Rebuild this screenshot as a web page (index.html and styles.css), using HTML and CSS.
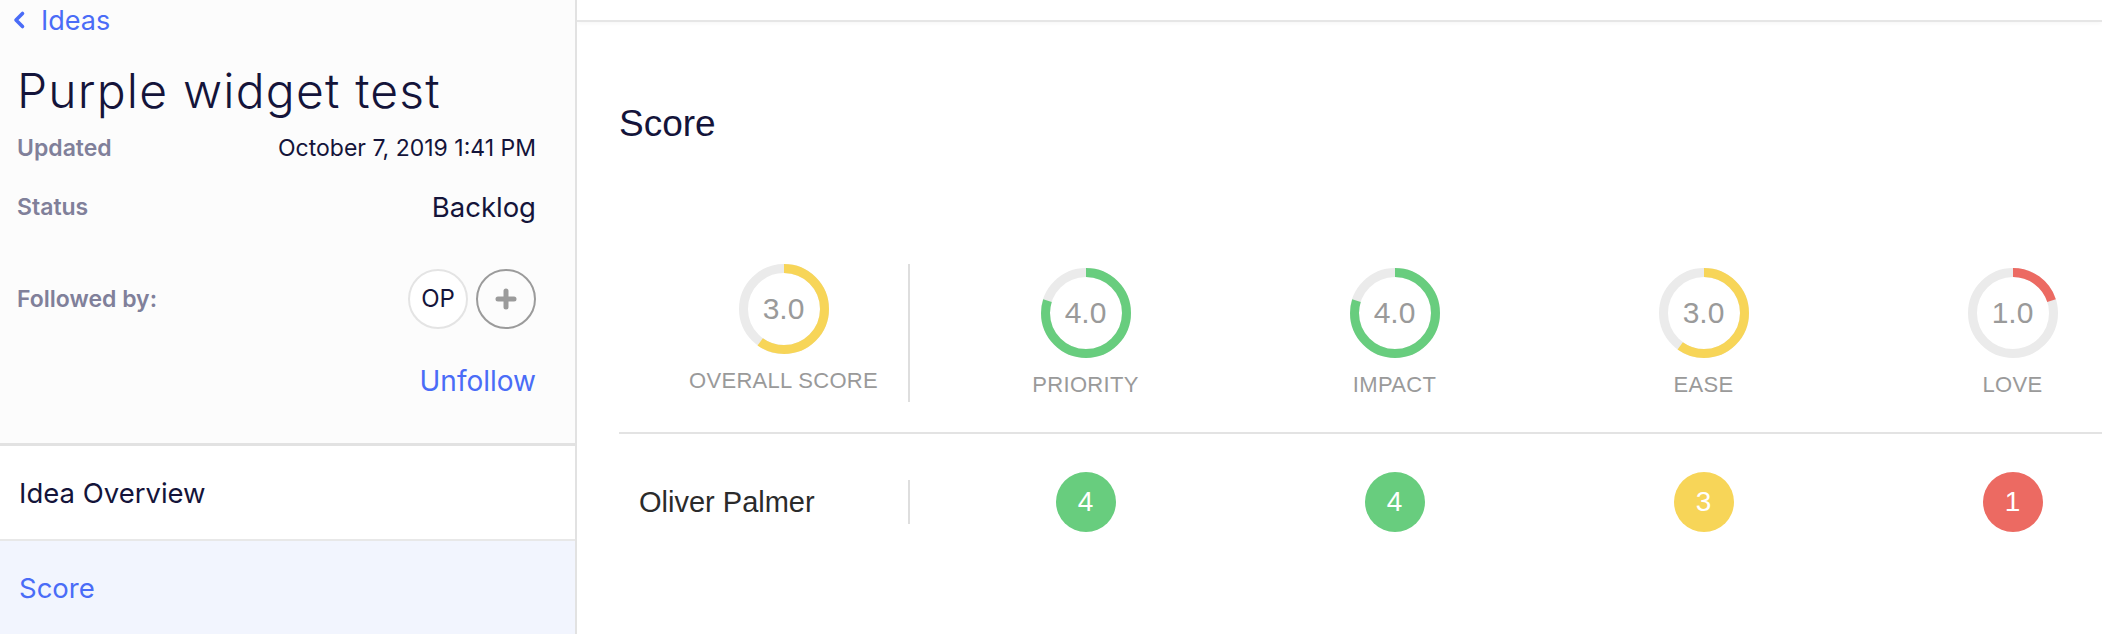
FILE: index.html
```html
<!DOCTYPE html>
<html lang="en">
<head>
<meta charset="utf-8">
<title>Purple widget test</title>
<link rel="stylesheet" href="styles.css">
</head>
<body>
<div class="app">
  <aside class="sidebar">
    <div class="sidebar-top">
      <a class="back" href="#">
        <svg class="back-icon" width="14" height="20" viewBox="0 0 14 20" aria-hidden="true"><path d="M10.5 3.5 L4 10 L10.5 16.5" fill="none" stroke="#4a6cf7" stroke-width="3.6" stroke-linecap="round" stroke-linejoin="round"/></svg>
        <span>Ideas</span>
      </a>
      <h1 class="title">Purple widget test</h1>
      <div class="meta meta-updated">
        <span class="meta-label">Updated</span>
        <span class="meta-date">October 7, 2019 1:41 PM</span>
      </div>
      <div class="meta meta-status">
        <span class="meta-label">Status</span>
        <span class="meta-status-value">Backlog</span>
      </div>
      <div class="meta meta-followed">
        <span class="meta-label">Followed by:</span>
        <div class="followers">
          <span class="avatar">OP</span>
          <span class="add-follower">
            <svg width="22" height="22" viewBox="0 0 22 22" aria-hidden="true"><path d="M11 3 V19 M3 11 H19" stroke="#9b9b9b" stroke-width="5" stroke-linecap="round"/></svg>
          </span>
        </div>
      </div>
      <div class="meta meta-unfollow">
        <a class="unfollow" href="#">Unfollow</a>
      </div>
    </div>
    <nav class="side-nav">
      <a class="nav-item" href="#">Idea Overview</a>
      <a class="nav-item nav-active" href="#">Score</a>
    </nav>
  </aside>

  <main class="main">
    <div class="topbar"></div>
    <section class="content">
      <h2 class="heading">Score</h2>

      <div class="summary">
        <div class="overall">
          <div class="metric">
            <div class="ring">
              <svg width="90" height="90" viewBox="0 0 90 90"><circle class="track" cx="45" cy="45" r="40.5"/><circle class="arc yellow" cx="45" cy="45" r="40.5" pathLength="100" stroke-dasharray="60 100" transform="rotate(-90 45 45)"/></svg>
              <span class="ring-value">3.0</span>
            </div>
            <div class="metric-label">OVERALL SCORE</div>
          </div>
        </div>
        <div class="metrics">
          <div class="metric col">
            <div class="ring">
              <svg width="90" height="90" viewBox="0 0 90 90"><circle class="track" cx="45" cy="45" r="40.5"/><circle class="arc green" cx="45" cy="45" r="40.5" pathLength="100" stroke-dasharray="80 100" transform="rotate(-90 45 45)"/></svg>
              <span class="ring-value">4.0</span>
            </div>
            <div class="metric-label">PRIORITY</div>
          </div>
          <div class="metric col">
            <div class="ring">
              <svg width="90" height="90" viewBox="0 0 90 90"><circle class="track" cx="45" cy="45" r="40.5"/><circle class="arc green" cx="45" cy="45" r="40.5" pathLength="100" stroke-dasharray="80 100" transform="rotate(-90 45 45)"/></svg>
              <span class="ring-value">4.0</span>
            </div>
            <div class="metric-label">IMPACT</div>
          </div>
          <div class="metric col">
            <div class="ring">
              <svg width="90" height="90" viewBox="0 0 90 90"><circle class="track" cx="45" cy="45" r="40.5"/><circle class="arc yellow" cx="45" cy="45" r="40.5" pathLength="100" stroke-dasharray="60 100" transform="rotate(-90 45 45)"/></svg>
              <span class="ring-value">3.0</span>
            </div>
            <div class="metric-label">EASE</div>
          </div>
          <div class="metric col">
            <div class="ring">
              <svg width="90" height="90" viewBox="0 0 90 90"><circle class="track" cx="45" cy="45" r="40.5"/><circle class="arc red" cx="45" cy="45" r="40.5" pathLength="100" stroke-dasharray="20 100" transform="rotate(-90 45 45)"/></svg>
              <span class="ring-value">1.0</span>
            </div>
            <div class="metric-label">LOVE</div>
          </div>
        </div>
      </div>

      <div class="ratings">
        <div class="rater">Oliver Palmer</div>
        <div class="metrics">
          <div class="col"><span class="badge green-bg">4</span></div>
          <div class="col"><span class="badge green-bg">4</span></div>
          <div class="col"><span class="badge yellow-bg">3</span></div>
          <div class="col"><span class="badge red-bg">1</span></div>
        </div>
      </div>
    </section>
  </main>
</div>
</body>
</html>
```

FILE: styles.css
```css
* { box-sizing: border-box; }

html, body {
  margin: 0;
  padding: 0;
  background: #ffffff;
}

body {
  font-family: "Inter", "Noto Sans", sans-serif;
  color: #14143a;
}

a { text-decoration: none; }

.app {
  display: flex;
  height: 634px;
  overflow: hidden;
}

/* ---------- Sidebar ---------- */
.sidebar {
  width: 577px;
  flex-shrink: 0;
  border-right: 2px solid #e2e2e2;
  background: #fcfcfc;
  display: flex;
  flex-direction: column;
}

.sidebar-top {
  padding: 0 39px 41px 17px;
}

.back {
  display: flex;
  align-items: center;
  height: 40px;
  gap: 15px;
  margin-left: -5px;
  color: #4a6cf7;
  font-size: 27px;
  font-weight: 400;
}

.back-icon { display: block; }

.title {
  margin: 22px 0 0 0;
  font-size: 48px;
  line-height: 57px;
  font-weight: 300;
  color: #14143a;
  letter-spacing: 1.2px;
}

.meta {
  display: flex;
  align-items: center;
  justify-content: space-between;
}

.meta-updated { height: 57px; }
.meta-status { height: 61px; }
.meta-followed { height: 123px; }
.meta-unfollow { height: 42px; justify-content: flex-end; }

.meta-label {
  font-size: 23px;
  font-weight: 600;
  color: #80809a;
}

.meta-date {
  font-size: 23px;
  color: #14143a;
}

.meta-status-value {
  font-size: 27.5px;
  color: #14143a;
}

.followers {
  display: flex;
  gap: 8px;
}

.avatar,
.add-follower {
  width: 60px;
  height: 60px;
  border-radius: 50%;
  display: flex;
  align-items: center;
  justify-content: center;
}

.avatar {
  border: 2px solid #e4e4e4;
  background: #ffffff;
  font-size: 24px;
  color: #14143a;
}

.add-follower {
  border: 2px solid #9b9b9b;
}

.unfollow {
  font-size: 28px;
  color: #4a6cf7;
}

.side-nav {
  border-top: 3px solid #e2e2e2;
  display: flex;
  flex-direction: column;
  flex: 1;
}

.nav-item {
  display: flex;
  align-items: center;
  height: 93px;
  padding-left: 19px;
  font-size: 27.5px;
  color: #14143a;
  background: #ffffff;
}

.nav-item + .nav-item {
  border-top: 2px solid #e8e8e8;
}

.nav-active {
  flex: 1;
  background: #f2f5fe;
  color: #4a6cf7;
}

/* ---------- Main ---------- */
.main {
  flex: 1;
  min-width: 0;
  overflow: hidden;
  background: #ffffff;
  font-family: "Liberation Sans", Arial, sans-serif;
}

.topbar {
  height: 22px;
  border-bottom: 2px solid #e6e6e6;
  box-shadow: 0 2px 4px rgba(0, 0, 0, 0.03);
}

.content {
  padding-left: 42px;
}

.heading {
  margin: 82px 0 0 0;
  font-size: 37px;
  line-height: 40px;
  font-weight: 400;
  color: #14143a;
}

.summary {
  display: flex;
  margin-top: 120px;
}

.overall {
  width: 291px;
  flex-shrink: 0;
  padding-left: 40px;
  border-right: 2px solid #dedede;
  display: flex;
  justify-content: center;
  height: 138px;
}

.metrics {
  display: flex;
  margin-left: 21px;
}

.col {
  width: 309px;
  flex-shrink: 0;
  display: flex;
  justify-content: center;
}

.metric {
  display: flex;
  flex-direction: column;
  align-items: center;
}

.ring {
  display: grid;
  width: 90px;
  height: 90px;
  place-items: center;
}

.ring > * { grid-area: 1 / 1; }

.ring svg { display: block; }

.track {
  fill: none;
  stroke: #ebebeb;
  stroke-width: 9;
}

.arc {
  fill: none;
  stroke-width: 9;
}

.arc.yellow { stroke: #f7d558; }
.arc.green { stroke: #68cd7e; }
.arc.red { stroke: #ec6a62; }

.ring-value {
  font-size: 30px;
  color: #9a9a9a;
}

.metric-label {
  margin-top: 14px;
  font-size: 22px;
  line-height: 26px;
  color: #9a9a9a;
  letter-spacing: 0.3px;
}

.ratings {
  display: flex;
  align-items: center;
  margin-top: 30px;
  border-top: 2px solid #e3e3e3;
  padding-top: 38px;
}

.rater {
  width: 291px;
  flex-shrink: 0;
  height: 44px;
  padding-left: 20px;
  border-right: 2px solid #dedede;
  display: flex;
  align-items: center;
  font-size: 29px;
  color: #2b2b2b;
}

.ratings .col { align-items: center; }

.badge {
  width: 60px;
  height: 60px;
  border-radius: 50%;
  display: flex;
  align-items: center;
  justify-content: center;
  font-size: 28px;
  color: #ffffff;
}

.green-bg { background: #68cd7e; }
.yellow-bg { background: #f7d558; }
.red-bg { background: #ec6a62; }
```
